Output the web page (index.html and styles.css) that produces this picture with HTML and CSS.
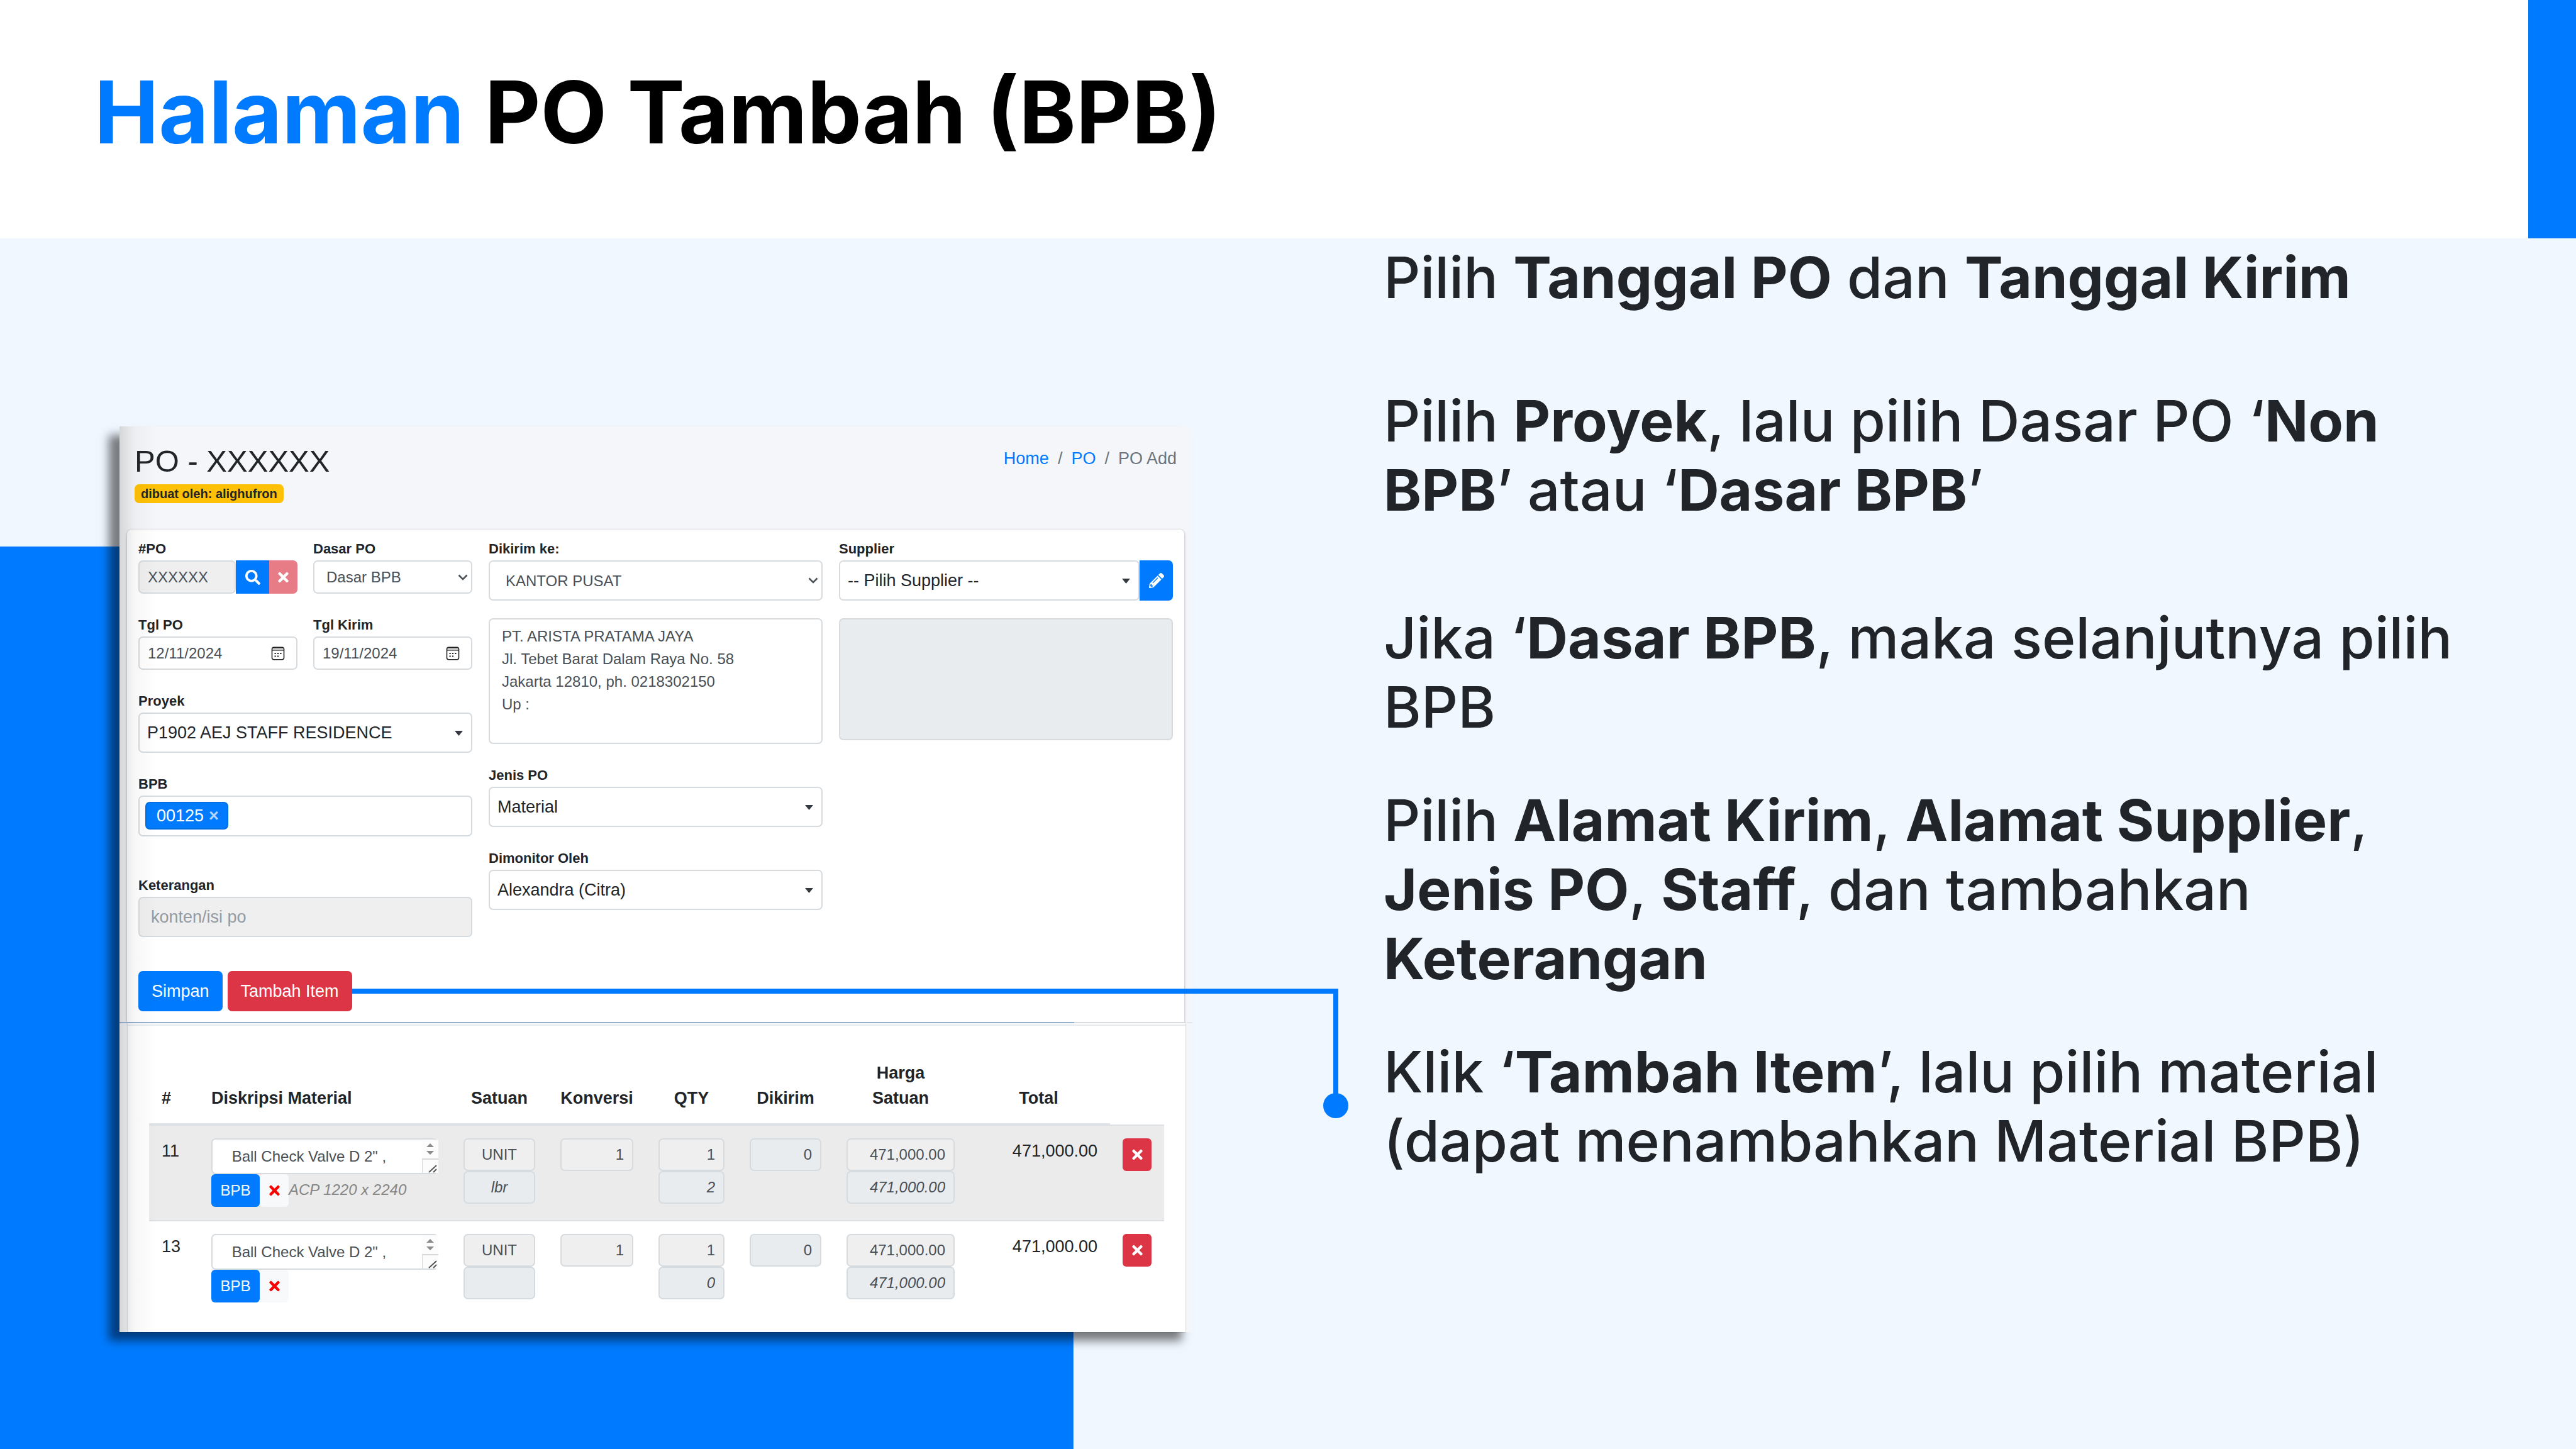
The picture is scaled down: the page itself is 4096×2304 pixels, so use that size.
FILE: index.html
```html
<!DOCTYPE html>
<html lang="id">
<head>
<meta charset="utf-8">
<title>Halaman PO Tambah (BPB)</title>
<link rel="stylesheet" href="styles.css">
</head>
<body>
<svg class="sprite" aria-hidden="true">
  <symbol id="i-search" viewBox="0 0 512 512"><path d="M505 442.7L405.3 343c-4.5-4.5-10.6-7-17-7H372c27.6-35.3 44-79.7 44-128C416 93.1 322.9 0 208 0S0 93.1 0 208s93.1 208 208 208c48.3 0 92.7-16.4 128-44v16.3c0 6.4 2.5 12.5 7 17l99.7 99.7c9.4 9.4 24.6 9.4 33.9 0l28.3-28.3c9.4-9.4 9.4-24.6.1-34zM208 336c-70.7 0-128-57.2-128-128 0-70.7 57.2-128 128-128 70.7 0 128 57.2 128 128 0 70.7-57.2 128-128 128z"/></symbol>
  <symbol id="i-times" viewBox="0 0 352 512"><path d="M242.72 256l100.07-100.07c12.28-12.28 12.28-32.19 0-44.48l-22.24-22.24c-12.28-12.28-32.19-12.28-44.48 0L176 189.28 75.93 89.21c-12.28-12.28-32.19-12.28-44.48 0L9.21 111.45c-12.28 12.28-12.28 32.19 0 44.48L109.28 256 9.21 356.07c-12.28 12.28-12.28 32.19 0 44.48l22.24 22.24c12.28 12.28 32.2 12.28 44.48 0L176 322.72l100.07 100.07c12.28 12.28 32.2 12.28 44.48 0l22.24-22.24c12.28-12.28 12.28-32.19 0-44.48L242.72 256z"/></symbol>
  <symbol id="i-pencil" viewBox="0 0 512 512"><path d="M497.9 142.1l-46.1 46.1c-4.7 4.7-12.3 4.7-17 0l-111-111c-4.7-4.7-4.7-12.3 0-17l46.1-46.1c18.7-18.7 49.1-18.7 67.9 0l60.1 60.1c18.8 18.7 18.8 49.1 0 67.9zM284.2 99.8L21.6 362.4.4 483.9c-2.9 16.4 11.4 30.6 27.8 27.8l121.5-21.3 262.6-262.6c4.7-4.7 4.7-12.3 0-17l-111-111c-4.8-4.7-12.4-4.7-17.1 0zM124.1 339.9c-5.5-5.5-5.5-14.3 0-19.8l154-154c5.5-5.5 14.3-5.5 19.8 0s5.5 14.3 0 19.8l-154 154c-5.5 5.5-14.3 5.5-19.8 0zM88 424h48v36.3l-64.5 11.3-31.1-31.1L51.7 376H88v48z"/></symbol>
  <symbol id="i-calendar" viewBox="0 0 22 22"><rect x="1.5" y="1.2" width="19" height="19.6" rx="3" fill="none" stroke="currentColor" stroke-width="1.6"/><path d="M2 2h18v1H2zM2 5h18v1.4H2z"/><path d="M5.500 10h2.200v2H5.500zM9.900 10h2.200v2H9.900zM14.300 10h2.200v2h-2.200zM5.500 14.500h2.200v2H5.500zM9.900 14.500h2.200v2H9.900z"/></symbol>
  <symbol id="i-chevron" viewBox="0 0 16 10"><path d="M1.5 1.5L8 8l6.5-6.5" fill="none" stroke="currentColor" stroke-width="2.6"/></symbol>
  <symbol id="i-caret" viewBox="0 0 13 8"><path d="M0 0h13L6.500 8z"/></symbol>
  <symbol id="i-scroll" viewBox="0 0 26 53"><path d="M0 0h26v53H0z" fill="#fcfcfc"/><path d="M7 12l6-6 6 6zM7 18h12l-6 6z" fill="#8b8b8b"/><path d="M0 30h26v2H0zM0 31h1v22H0z" fill="#d9d9d9"/><path d="M11 52L23 41M18 52l5-5" fill="none" stroke="#555" stroke-width="2"/></symbol>
</svg>

<header class="masthead">
  <h1 class="masthead-title"><span class="accent">Halaman</span> PO Tambah (BPB)</h1>
</header>

<main class="slide">
  <section class="window">
    <div class="window-head">
      <div>
        <h2 class="window-title">PO - XXXXXX</h2>
        <span class="badge">dibuat oleh: alighufron</span>
      </div>
      <nav class="crumbs"><a href="#">Home</a><span>/</span><a href="#">PO</a><span>/</span><span>PO Add</span></nav>
    </div>

    <form class="panel">
      <div class="columns">
        <div class="column">
          <div class="pair">
            <div class="field">
              <label for="po">#PO</label>
              <div class="group">
                <input id="po" class="control short muted" type="text" value="XXXXXX" readonly>
                <button type="button" class="addon search" aria-label="Cari"><svg class="ico"><use href="#i-search"/></svg></button>
                <button type="button" class="addon clear" aria-label="Hapus"><svg class="ico narrow"><use href="#i-times"/></svg></button>
              </div>
            </div>
            <div class="field">
              <label for="dasar">Dasar PO</label>
              <div class="pick">
                <select id="dasar" class="control short native"><option>Dasar BPB</option></select>
                <svg class="chevron"><use href="#i-chevron"/></svg>
              </div>
            </div>
          </div>
          <div class="pair">
            <div class="field">
              <label for="tglpo">Tgl PO</label>
              <div class="pick">
                <input id="tglpo" class="control short" type="text" value="12/11/2024">
                <svg class="calendar"><use href="#i-calendar"/></svg>
              </div>
            </div>
            <div class="field">
              <label for="tglkirim">Tgl Kirim</label>
              <div class="pick">
                <input id="tglkirim" class="control short" type="text" value="19/11/2024">
                <svg class="calendar"><use href="#i-calendar"/></svg>
              </div>
            </div>
          </div>
          <div class="field">
            <label for="proyek">Proyek</label>
            <div class="pick">
              <select id="proyek" class="control tall"><option>P1902 AEJ STAFF RESIDENCE</option></select>
              <svg class="caret"><use href="#i-caret"/></svg>
            </div>
          </div>
          <div class="field">
            <label for="bpb">BPB</label>
            <div class="control tags">
              <span class="tag">00125 <button type="button" class="tag-x" aria-label="Hapus 00125">×</button></span>
              <input id="bpb" class="tags-input" type="text">
            </div>
          </div>
          <div class="field note">
            <label for="ket">Keterangan</label>
            <input id="ket" class="control tall muted wide-pad" type="text" placeholder="konten/isi po" readonly>
          </div>
        </div>

        <div class="column">
          <div class="field">
            <label for="kirim">Dikirim ke:</label>
            <div class="pick">
              <select id="kirim" class="control tall native small"><option>KANTOR PUSAT</option></select>
              <svg class="chevron"><use href="#i-chevron"/></svg>
            </div>
            <textarea class="control address" aria-label="Alamat kirim">PT. ARISTA PRATAMA JAYA
Jl. Tebet Barat Dalam Raya No. 58
Jakarta 12810, ph. 0218302150
Up :</textarea>
          </div>
          <div class="field">
            <label for="jenis">Jenis PO</label>
            <div class="pick">
              <select id="jenis" class="control tall"><option>Material</option></select>
              <svg class="caret"><use href="#i-caret"/></svg>
            </div>
          </div>
          <div class="field">
            <label for="monitor">Dimonitor Oleh</label>
            <div class="pick">
              <select id="monitor" class="control tall"><option>Alexandra (Citra)</option></select>
              <svg class="caret"><use href="#i-caret"/></svg>
            </div>
          </div>
        </div>

        <div class="column">
          <div class="field">
            <label for="supplier">Supplier</label>
            <div class="group">
              <div class="pick">
                <select id="supplier" class="control tall"><option>-- Pilih Supplier --</option></select>
                <svg class="caret"><use href="#i-caret"/></svg>
              </div>
              <button type="button" class="addon edit" aria-label="Ubah supplier"><svg class="ico"><use href="#i-pencil"/></svg></button>
            </div>
            <textarea class="control address filled" aria-label="Alamat supplier" readonly></textarea>
          </div>
        </div>
      </div>

      <div class="actions">
        <button type="button" class="btn primary">Simpan</button>
        <div class="anchor">
          <button type="button" class="btn danger">Tambah Item</button>
          <span class="connector"></span>
        </div>
      </div>
    </form>

    <div class="seam"></div>

    <div class="items">
      <table class="grid">
        <colgroup><col class="c-no"><col><col class="c-unit"><col class="c-conv"><col class="c-qty"><col class="c-unit"><col class="c-price"><col class="c-total"><col class="c-act"></colgroup>
        <thead>
          <tr><th class="left">#</th><th class="left">Diskripsi Material</th><th>Satuan</th><th>Konversi</th><th>QTY</th><th>Dikirim</th><th>Harga Satuan</th><th>Total</th></tr>
        </thead>
        <tbody>
          <tr>
            <td>11</td>
            <td>
              <div class="pick">
                <textarea class="control desc" aria-label="Diskripsi material 11"> Ball Check Valve D 2" ,
2</textarea>
                <svg class="scroll"><use href="#i-scroll"/></svg>
              </div>
              <div class="desc-row"><button type="button" class="mini primary">BPB</button><button type="button" class="mini light" aria-label="Hapus BPB"><svg class="ico narrow"><use href="#i-times"/></svg></button><em>ACP 1220 x 2240</em></div>
            </td>
            <td><input class="control cell center muted" aria-label="Satuan" value="UNIT" readonly><input class="control cell center alt" aria-label="Satuan kedua" value="lbr" readonly></td>
            <td><input class="control cell muted" aria-label="Konversi" value="1" readonly></td>
            <td><input class="control cell muted" aria-label="QTY" value="1" readonly><input class="control cell alt" aria-label="QTY kedua" value="2" readonly></td>
            <td><input class="control cell filled" aria-label="Dikirim" value="0" readonly></td>
            <td><input class="control cell muted" aria-label="Harga satuan" value="471,000.00" readonly><input class="control cell alt" aria-label="Harga satuan kedua" value="471,000.00" readonly></td>
            <td class="right">471,000.00</td>
            <td><button type="button" class="mini danger" aria-label="Hapus item"><svg class="ico narrow"><use href="#i-times"/></svg></button></td>
          </tr>
          <tr>
            <td>13</td>
            <td>
              <div class="pick">
                <textarea class="control desc" aria-label="Diskripsi material 13"> Ball Check Valve D 2" ,
2</textarea>
                <svg class="scroll"><use href="#i-scroll"/></svg>
              </div>
              <div class="desc-row"><button type="button" class="mini primary">BPB</button><button type="button" class="mini light" aria-label="Hapus BPB"><svg class="ico narrow"><use href="#i-times"/></svg></button></div>
            </td>
            <td><input class="control cell center muted" aria-label="Satuan" value="UNIT" readonly><input class="control cell center alt" aria-label="Satuan kedua" readonly></td>
            <td><input class="control cell muted" aria-label="Konversi" value="1" readonly></td>
            <td><input class="control cell muted" aria-label="QTY" value="1" readonly><input class="control cell alt" aria-label="QTY kedua" value="0" readonly></td>
            <td><input class="control cell filled" aria-label="Dikirim" value="0" readonly></td>
            <td><input class="control cell muted" aria-label="Harga satuan" value="471,000.00" readonly><input class="control cell alt" aria-label="Harga satuan kedua" value="471,000.00" readonly></td>
            <td class="right">471,000.00</td>
            <td><button type="button" class="mini danger" aria-label="Hapus item"><svg class="ico narrow"><use href="#i-times"/></svg></button></td>
          </tr>
        </tbody>
      </table>
    </div>
  </section>

  <section class="steps">
    <p>Pilih <b>Tanggal PO</b> dan <b>Tanggal Kirim</b></p>
    <p>Pilih <b>Proyek</b>, lalu pilih Dasar PO ‘<b>Non BPB</b>’ atau ‘<b>Dasar BPB</b>’</p>
    <p>Jika ‘<b>Dasar BPB</b>, maka selanjutnya pilih BPB</p>
    <p>Pilih <b>Alamat Kirim</b>, <b>Alamat Supplier</b>, <b>Jenis PO</b>, <b>Staff</b>, dan tambahkan <b>Keterangan</b></p>
    <p>Klik ‘<b>Tambah Item</b>’, lalu pilih material (dapat menambahkan Material BPB)</p>
  </section>
</main>
</body>
</html>
```

FILE: styles.css
```css
:root {
  --blue: #007bff;
  --red: #dc3545;
  --ink: #212529;
  --text: #495057;
  --line: #d6dbe0;
}

*,
*::before,
*::after { box-sizing: border-box; }

body {
  margin: 0;
  min-height: 100vh;
  display: flex;
  flex-direction: column;
  background: #f0f7ff;
  color: var(--ink);
  font-family: Inter, sans-serif;
  font-optical-sizing: none;
}

button, input, select, textarea { font-family: inherit; margin: 0; }

.sprite { display: none; }

/* Slide header */
.masthead {
  display: flex;
  align-items: center;
  height: 379px;
  padding: 0 150px 24px;
  background: #fff;
  border-right: 76px solid var(--blue);
}

.masthead-title {
  margin: 0;
  font-size: 137px;
  line-height: 168px;
  font-weight: 700;
  color: #000;
}

.accent { color: var(--blue); }

/* Slide body: form window on the left, steps on the right */
.slide {
  flex: 1;
  display: grid;
  grid-template-columns: minmax(0, 1706fr) minmax(0, 1728fr);
  column-gap: 304px;
  align-items: start;
  padding: 0 168px 100px 190px;
  background: linear-gradient(var(--blue), var(--blue)) 0 490px / 41.67% 100% no-repeat;
}

.steps {
  padding-top: 7px;
  font-size: 91px;
  line-height: 110px;
  font-weight: 500;
}

.steps p { margin: 0 0 70px; }
.steps p:nth-child(1) { margin-bottom: 118px; }
.steps p:nth-child(2) { margin-bottom: 125px; }

/* Form window */
.window {
  position: relative;
  margin-top: 299px;
  background: #f4f6f9;
  font-family: "Liberation Sans", Arial, sans-serif;
  font-size: 27px;
  line-height: 40px;
  box-shadow: -17px 14px 14px rgba(0, 0, 0, .5);
}

.window::after {
  content: "";
  position: absolute;
  inset: 0 auto 0 0;
  width: 60px;
  background: linear-gradient(90deg, rgba(0, 0, 0, .13), rgba(0, 0, 0, .03) 40%, transparent);
  pointer-events: none;
}

.window-head {
  display: flex;
  justify-content: space-between;
  align-items: flex-start;
  height: 164px;
  padding: 26px 25px 0 24px;
}

.window-title {
  margin: 0 0 8px;
  font-size: 49px;
  line-height: 58px;
  font-weight: 400;
}

.badge {
  display: block;
  width: max-content;
  padding: 0 10px;
  border-radius: 7px;
  background: #ffc107;
  font-size: 20px;
  line-height: 30px;
  font-weight: 700;
}

.crumbs {
  display: flex;
  gap: 14px;
  padding-top: 5px;
  color: #6c757d;
}

.crumbs a { color: var(--blue); text-decoration: none; }

.panel {
  margin: 0 13px 0 12px;
  padding: 13px 18px 17px;
  border-radius: 7px 7px 0 0;
  background: #fff;
  box-shadow: 0 0 2px rgba(0, 0, 0, .2), 0 2px 5px rgba(0, 0, 0, .2);
}

.columns {
  display: grid;
  grid-template-columns: repeat(3, minmax(0, 1fr));
  gap: 26px;
  align-items: start;
}

.column {
  display: flex;
  flex-direction: column;
  gap: 32px;
}

.pair {
  display: grid;
  grid-template-columns: repeat(2, minmax(0, 1fr));
  gap: 25px;
}

.note { margin-top: 28px; }

.field label {
  display: block;
  height: 36px;
  font-size: 22px;
  line-height: 36px;
  font-weight: 700;
}

.control {
  display: block;
  width: 100%;
  border: 2px solid var(--line);
  border-radius: 7px;
  background: #fff;
  color: var(--text);
  outline: 0;
  appearance: none;
}

.short {
  height: 53px;
  padding: 0 13px;
  font-size: 24px;
}

.tall {
  height: 64px;
  padding: 0 12px;
  color: var(--ink);
  font-size: 27px;
}

.native { padding-left: 19px; color: var(--text); }
.small { padding-left: 25px; font-size: 24px; }
.wide-pad { padding-left: 18px; }
.wide-pad::placeholder { color: #939ba2; opacity: 1; }
.muted { background: #efefef; }
.filled { background: #e9ecef; }

.pick { position: relative; flex: 1; min-width: 0; }

.pick svg { position: absolute; pointer-events: none; }
.pick .chevron { right: 7px; top: calc(50% - 5px); width: 16px; height: 10px; color: var(--text); }
.pick .caret { right: 15px; top: calc(50% - 3px); width: 13px; height: 8px; fill: #343a40; }
.pick .calendar { right: 20px; top: calc(50% - 11px); width: 22px; height: 22px; color: #222; fill: #222; }
.pick .scroll { right: 0; top: 2px; width: 26px; height: 53px; }

.group { display: flex; }
.group .control { flex: 1; min-width: 0; }

.addon {
  display: grid;
  place-items: center;
  width: 53px;
  padding: 0;
  border: 0;
  background: var(--blue);
  color: #fff;
}

.addon.clear { width: 45px; border-radius: 0 7px 7px 0; background: #e77c87; }
.addon.edit { border-radius: 0 7px 7px 0; }

.ico { display: block; width: 24px; height: 24px; fill: currentColor; }
.ico.narrow { width: 17px; }

.tags {
  display: flex;
  align-items: flex-start;
  height: 65px;
  padding: 8px 9px;
}

.tag {
  display: flex;
  gap: 8px;
  align-items: center;
  height: 44px;
  padding: 0 13px 0 16px;
  border: 2px solid #006fe6;
  border-radius: 7px;
  background: var(--blue);
  color: #fff;
}

.tag-x {
  padding: 0;
  border: 0;
  background: none;
  color: rgba(255, 255, 255, .7);
  font-size: 27px;
  line-height: 40px;
  font-weight: 700;
}

.tags-input { flex: 1; min-width: 0; height: 44px; border: 0; background: none; outline: 0; }

.address {
  height: 200px;
  margin-top: 28px;
  padding: 9px 19px;
  font-size: 24px;
  line-height: 36px;
  resize: none;
  overflow: hidden;
}

.address.filled { height: 194px; }

.actions {
  display: flex;
  gap: 8px;
  margin-top: 54px;
}

.btn {
  display: block;
  height: 64px;
  padding: 0 21px;
  border: 0;
  border-radius: 7px;
  color: #fff;
  font-size: 27px;
}

.primary { background: var(--blue); color: #fff; }
.danger { background: var(--red); color: #fff; }

/* Line from the button to its step */
.anchor { position: relative; }

.connector {
  position: absolute;
  left: 100%;
  top: 28px;
  z-index: 2;
  width: 1568px;
  height: 186px;
  border: solid var(--blue);
  border-width: 8px 8px 0 0;
}

.connector::after {
  content: "";
  position: absolute;
  right: -24px;
  bottom: -20px;
  width: 40px;
  height: 40px;
  border-radius: 50%;
  background: var(--blue);
}

.seam {
  position: relative;
  height: 2px;
  background: linear-gradient(90deg, #9db9da 89%, #e3e6ea 89%);
}

/* Item table */
.items {
  position: relative;
  margin: 0 11px 0 13px;
  padding: 39px 34px 26px;
  background: linear-gradient(#e9eaeb, #e9eaeb) 0 2px / 100% 2px no-repeat #fff;
  box-shadow: 0 0 2px rgba(0, 0, 0, .3);
}

.grid {
  width: 100%;
  table-layout: fixed;
  border-spacing: 0;
}

.c-no { width: 79px; }
.c-unit { width: 154px; }
.c-conv { width: 156px; }
.c-qty { width: 145px; }
.c-price { width: 212px; }
.c-total { width: 227px; }
.c-act { width: 86px; }

.grid th {
  padding: 20px;
  border-bottom: 2px solid #dee2e6;
  vertical-align: bottom;
  text-align: center;
}

.grid .left { text-align: left; }

.grid td {
  height: 152px;
  padding: 20px;
  border-top: 2px solid #dee2e6;
  vertical-align: top;
}

.grid tbody tr:first-child { background: #ebebeb; }
.grid .right { text-align: right; }

.cell {
  height: 52px;
  padding: 0 13px;
  font-size: 24px;
  text-align: right;
}

.cell.center { text-align: center; }
.cell.alt { background: #e9ecef; font-style: italic; }

.desc {
  height: 57px;
  padding: 9px 28px 0 24px;
  font-size: 24px;
  line-height: 36px;
  white-space: pre;
  resize: none;
  overflow: hidden;
}

.desc-row {
  display: flex;
  height: 52px;
}

.desc-row em {
  color: #868686;
  font-size: 24px;
  line-height: 50px;
  white-space: nowrap;
}

.mini {
  display: grid;
  place-items: center;
  width: 46px;
  height: 52px;
  padding: 0;
  border: 0;
  border-radius: 6px;
  font-size: 24px;
}

.mini.primary { width: 77px; }
.mini.light { background: #f8f9fa; color: #f00; }
```
